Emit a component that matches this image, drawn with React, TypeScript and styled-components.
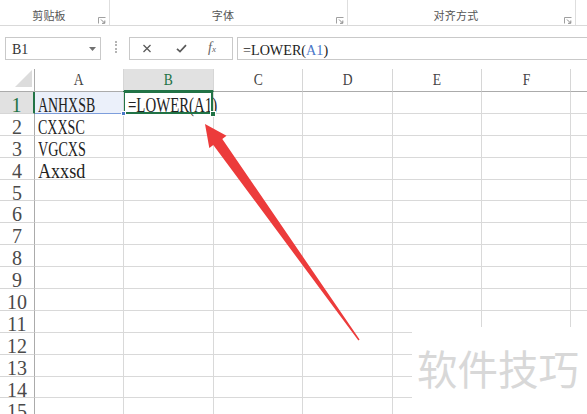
import React, { useLayoutEffect, useRef, useState } from 'react';
import styled, { createGlobalStyle } from 'styled-components';

const GlobalStyle = createGlobalStyle`
  html, body { margin: 0; padding: 0; background: #fff; }
  body { width: 587px; height: 414px; overflow: hidden; font-family: "Liberation Serif", "DejaVu Serif", serif; }
`;

const Window = styled.div`
  position: relative;
  width: 587px;
  height: 414px;
  overflow: hidden;
  background: #fff;
  display: flex;
  flex-direction: column;
`;

/* ---------- ribbon group captions ---------- */
const Ribbon = styled.div`
  height: 25px;
  flex: none;
  border-bottom: 1px solid #d9d9d9;
  display: grid;
  grid-template-columns: 110px 238px 228px 1fr;
`;

const Group = styled.div<{ $last?: boolean }>`
  display: grid;
  grid-template-columns: 1fr auto;
  padding-right: 3px;
  border-right: ${(p) => (p.$last ? 'none' : '1px solid #dedede')};
`;

const GroupLabel = styled.span`
  align-self: end;
  justify-self: center;
  padding-bottom: 3px;
  font-family: "Noto Sans CJK SC", "Noto Sans", sans-serif;
  font-size: 11px;
  line-height: 14px;
  letter-spacing: 0.2px;
  color: #555;
`;

const Launcher = styled.svg`
  align-self: end;
  margin-bottom: 1px;
  width: 8px;
  height: 7px;
`;

const LauncherIcon = () => (
  <Launcher viewBox="0 0 8 7">
    <path d="M0.5 6.5 V0.5 H7.5" stroke="#a0a0a0" strokeWidth="1" fill="none" />
    <path d="M3 2.5 L6.5 6" stroke="#8a8a8a" strokeWidth="1" fill="none" />
    <path d="M4 6.3 H6.8 V3.5" stroke="#8a8a8a" strokeWidth="1" fill="none" />
  </Launcher>
);

/* ---------- formula bar ---------- */
const FormulaRow = styled.div`
  height: 43px;
  flex: none;
  display: flex;
  align-items: flex-start;
  padding: 11px 0 0 5px;
  box-sizing: border-box;
`;

const NameBox = styled.div`
  width: 96px;
  height: 23px;
  box-sizing: border-box;
  border: 1px solid #c9c9c9;
  display: flex;
  align-items: center;
  justify-content: space-between;
  padding: 0 4px 0 6px;
`;

const NameText = styled.span`
  font-size: 14px;
  line-height: 14px;
  margin-top: 3px;
  color: #333;
`;

const Grip = styled.div`
  width: 0;
  height: 12px;
  margin: 4px 0 0 14px;
  border-left: 2px dotted #b4b4b4;
`;

const ButtonBox = styled.div`
  width: 104px;
  height: 23px;
  margin-left: 12px;
  box-sizing: border-box;
  border: 1px solid #c9c9c9;
  display: grid;
  grid-template-columns: 34px 34px 28px;
  align-items: center;
  justify-items: center;
`;

const FxMark = styled.span`
  font-family: "Liberation Serif", serif;
  font-style: italic;
  font-size: 14px;
  color: #666;
  line-height: 14px;
  & > small { font-size: 9px; }
`;

const FormulaInput = styled.div`
  flex: 1;
  height: 23px;
  margin-left: 4px;
  box-sizing: border-box;
  border: 1px solid #c9c9c9;
  border-right: none;
  display: flex;
  align-items: center;
  padding-left: 5px;
`;

const FormulaText = styled.span`
  font-size: 15px;
  line-height: 15px;
  margin-top: 3px;
  color: #222;
`;

const RefText = styled.span`
  color: #4a78c9;
`;

/* ---------- sheet grid ---------- */
const Sheet = styled.div`
  display: grid;
  grid-template-columns: 35px 89px 90px 89px 90px 89px 89px 89px;
  grid-template-rows: 23px;
  grid-auto-rows: 21.9px;
`;

const Corner = styled.div`
  box-sizing: border-box;
  border-right: 1px solid #ababab;
  border-bottom: 1px solid #ababab;
  display: flex;
  align-items: flex-end;
  justify-content: flex-end;
  padding: 0 2px 4px 0;
`;

const SelectAll = styled.div`
  width: 0;
  height: 0;
  border-left: 17px solid transparent;
  border-bottom: 17px solid #dcdcdc;
`;

const ColHead = styled.div<{ $active?: boolean }>`
  box-sizing: border-box;
  background: ${(p) => (p.$active ? '#e1e1e1' : '#fff')};
  border-right: 1px solid #d6d6d6;
  border-bottom: ${(p) => (p.$active ? '2px solid #217346' : '1px solid #ababab')};
  display: flex;
  align-items: center;
  justify-content: center;
  padding-top: ${(p) => (p.$active ? '1px' : '0')};
  font-size: 16px;
  color: ${(p) => (p.$active ? '#217346' : '#444')};
`;

const ColLetter = styled.span`
  display: inline-block;
  transform: scaleX(0.85);
`;

const RowHead = styled.div<{ $active?: boolean }>`
  box-sizing: border-box;
  background: ${(p) => (p.$active ? '#e1e1e1' : '#fff')};
  border-right: ${(p) => (p.$active ? '2px solid #217346' : '1px solid #ababab')};
  border-bottom: 1px solid #d6d6d6;
  text-align: center;
  padding-top: 5px;
  font-size: 20px;
  line-height: 16px;
  color: ${(p) => (p.$active ? '#217346' : '#4a4a4a')};
`;

const Cell = styled.div<{ $ref?: boolean; $current?: boolean }>`
  position: relative;
  z-index: ${(p) => (p.$current ? 2 : p.$ref ? 3 : 'auto')};
  box-sizing: border-box;
  background: ${(p) => (p.$ref ? '#ebf0fa' : '#fff')};
  border-right: 1px solid #d9d9d9;
  border-bottom: 1px solid ${(p) => (p.$ref ? '#7d9edc' : '#d9d9d9')};
  padding: 5px 0 0 ${(p) => (p.$current ? '4px' : '3px')};
  font-size: 20px;
  line-height: 16px;
  color: #222;
  white-space: nowrap;

  ${(p) =>
    p.$current &&
    `
    &::after {
      content: '';
      position: absolute;
      inset: -1px 0 -1px -1px;
      border: 2px solid #217346;
      pointer-events: none;
    }
    &::before {
      content: '';
      position: absolute;
      right: -3px;
      bottom: -4px;
      width: 4px;
      height: 4px;
      background: #217346;
      border: 1px solid #fff;
      z-index: 1;
    }
  `}

  ${(p) =>
    p.$ref &&
    `
    &::before {
      content: '';
      position: absolute;
      right: -3px;
      bottom: -3px;
      width: 3px;
      height: 3px;
      background: #4a78c9;
      border: 1px solid #fff;
    }
  `}
`;

const Squeeze = styled.span`
  display: inline-block;
  transform-origin: left center;
  white-space: nowrap;
`;

function FitText({ width, children }: { width: number; children: React.ReactNode }) {
  const ref = useRef<HTMLSpanElement>(null);
  const [scale, setScale] = useState(1);
  useLayoutEffect(() => {
    const measure = () => {
      const w = ref.current?.offsetWidth;
      if (w) setScale(width / w);
    };
    measure();
    document.fonts?.ready.then(measure);
  }, [width]);
  return (
    <Squeeze ref={ref} style={{ transform: `scaleX(${scale})` }}>
      {children}
    </Squeeze>
  );
}

/* ---------- overlays ---------- */
const Overlay = styled.svg`
  position: absolute;
  left: 0;
  top: 0;
  width: 587px;
  height: 414px;
  pointer-events: none;
  z-index: 5;
`;

const Watermark = styled.div`
  position: absolute;
  left: 412px;
  top: 327px;
  right: 0;
  bottom: 0;
  z-index: 4;
  background: #fff;
  padding: 20px 0 0 5px;
  font-family: "Noto Sans CJK SC", "Noto Sans", sans-serif;
  font-size: 40.5px;
  line-height: 41px;
  color: #d8d8d8;
  white-space: nowrap;
`;

// the last column only peeks in at the right edge, so its letter stays off screen
const columns = ['A', 'B', 'C', 'D', 'E', 'F', ''];
const rowCount = 15;

const columnA: Record<number, { text: string; width: number }> = {
  1: { text: 'ANHXSB', width: 57 },
  2: { text: 'CXXSC', width: 47 },
  3: { text: 'VGCXS', width: 48 },
  4: { text: 'Axxsd', width: 47 },
};

export default function App() {
  const rows = Array.from({ length: rowCount }, (_, i) => i + 1);
  return (
    <Window>
      <GlobalStyle />
      <Ribbon>
        <Group>
          <GroupLabel>剪贴板</GroupLabel>
          <LauncherIcon />
        </Group>
        <Group>
          <GroupLabel>字体</GroupLabel>
          <LauncherIcon />
        </Group>
        <Group>
          <GroupLabel>对齐方式</GroupLabel>
          <LauncherIcon />
        </Group>
        <Group $last />
      </Ribbon>

      <FormulaRow>
        <NameBox>
          <NameText>B1</NameText>
          <svg width="7" height="4" viewBox="0 0 7 4">
            <path d="M0 0 H7 L3.5 4 Z" fill="#707070" />
          </svg>
        </NameBox>
        <Grip />
        <ButtonBox>
          <svg width="10" height="9" viewBox="0 0 10 9">
            <path d="M1.5 1 L8.5 8 M8.5 1 L1.5 8" stroke="#5a5a5a" strokeWidth="1.3" fill="none" />
          </svg>
          <svg width="11" height="9" viewBox="0 0 11 9">
            <path d="M1 4.8 L4 7.6 L10 1.2" stroke="#5a5a5a" strokeWidth="1.7" fill="none" />
          </svg>
          <FxMark>
            f<small>x</small>
          </FxMark>
        </ButtonBox>
        <FormulaInput>
          <FormulaText>
            <FitText width={85}>
              =LOWER(<RefText>A1</RefText>)
            </FitText>
          </FormulaText>
        </FormulaInput>
      </FormulaRow>

      <Sheet>
        <Corner>
          <SelectAll />
        </Corner>
        {columns.map((c, i) => (
          <ColHead key={i} $active={c === 'B'}>
            {c && <ColLetter>{c}</ColLetter>}
          </ColHead>
        ))}
        {rows.map((r) => (
          <React.Fragment key={r}>
            <RowHead $active={r === 1}>{r}</RowHead>
            {columns.map((c, i) => {
              const isA1 = c === 'A' && r === 1;
              const isB1 = c === 'B' && r === 1;
              const value = c === 'A' ? columnA[r] : undefined;
              return (
                <Cell key={i} $ref={isA1} $current={isB1}>
                  {value && <FitText width={value.width}>{value.text}</FitText>}
                  {isB1 && <FitText width={89}>=LOWER(A1)</FitText>}
                </Cell>
              );
            })}
          </React.Fragment>
        ))}
      </Sheet>

      <Watermark>软件技巧</Watermark>

      <Overlay viewBox="0 0 587 414">
        <polygon
          points="205,124 226.5,135.8 222.3,139 359.6,339.6 358.4,340.4 213.3,145 209.3,148"
          fill="#ec3b3b"
        />
      </Overlay>
    </Window>
  );
}
